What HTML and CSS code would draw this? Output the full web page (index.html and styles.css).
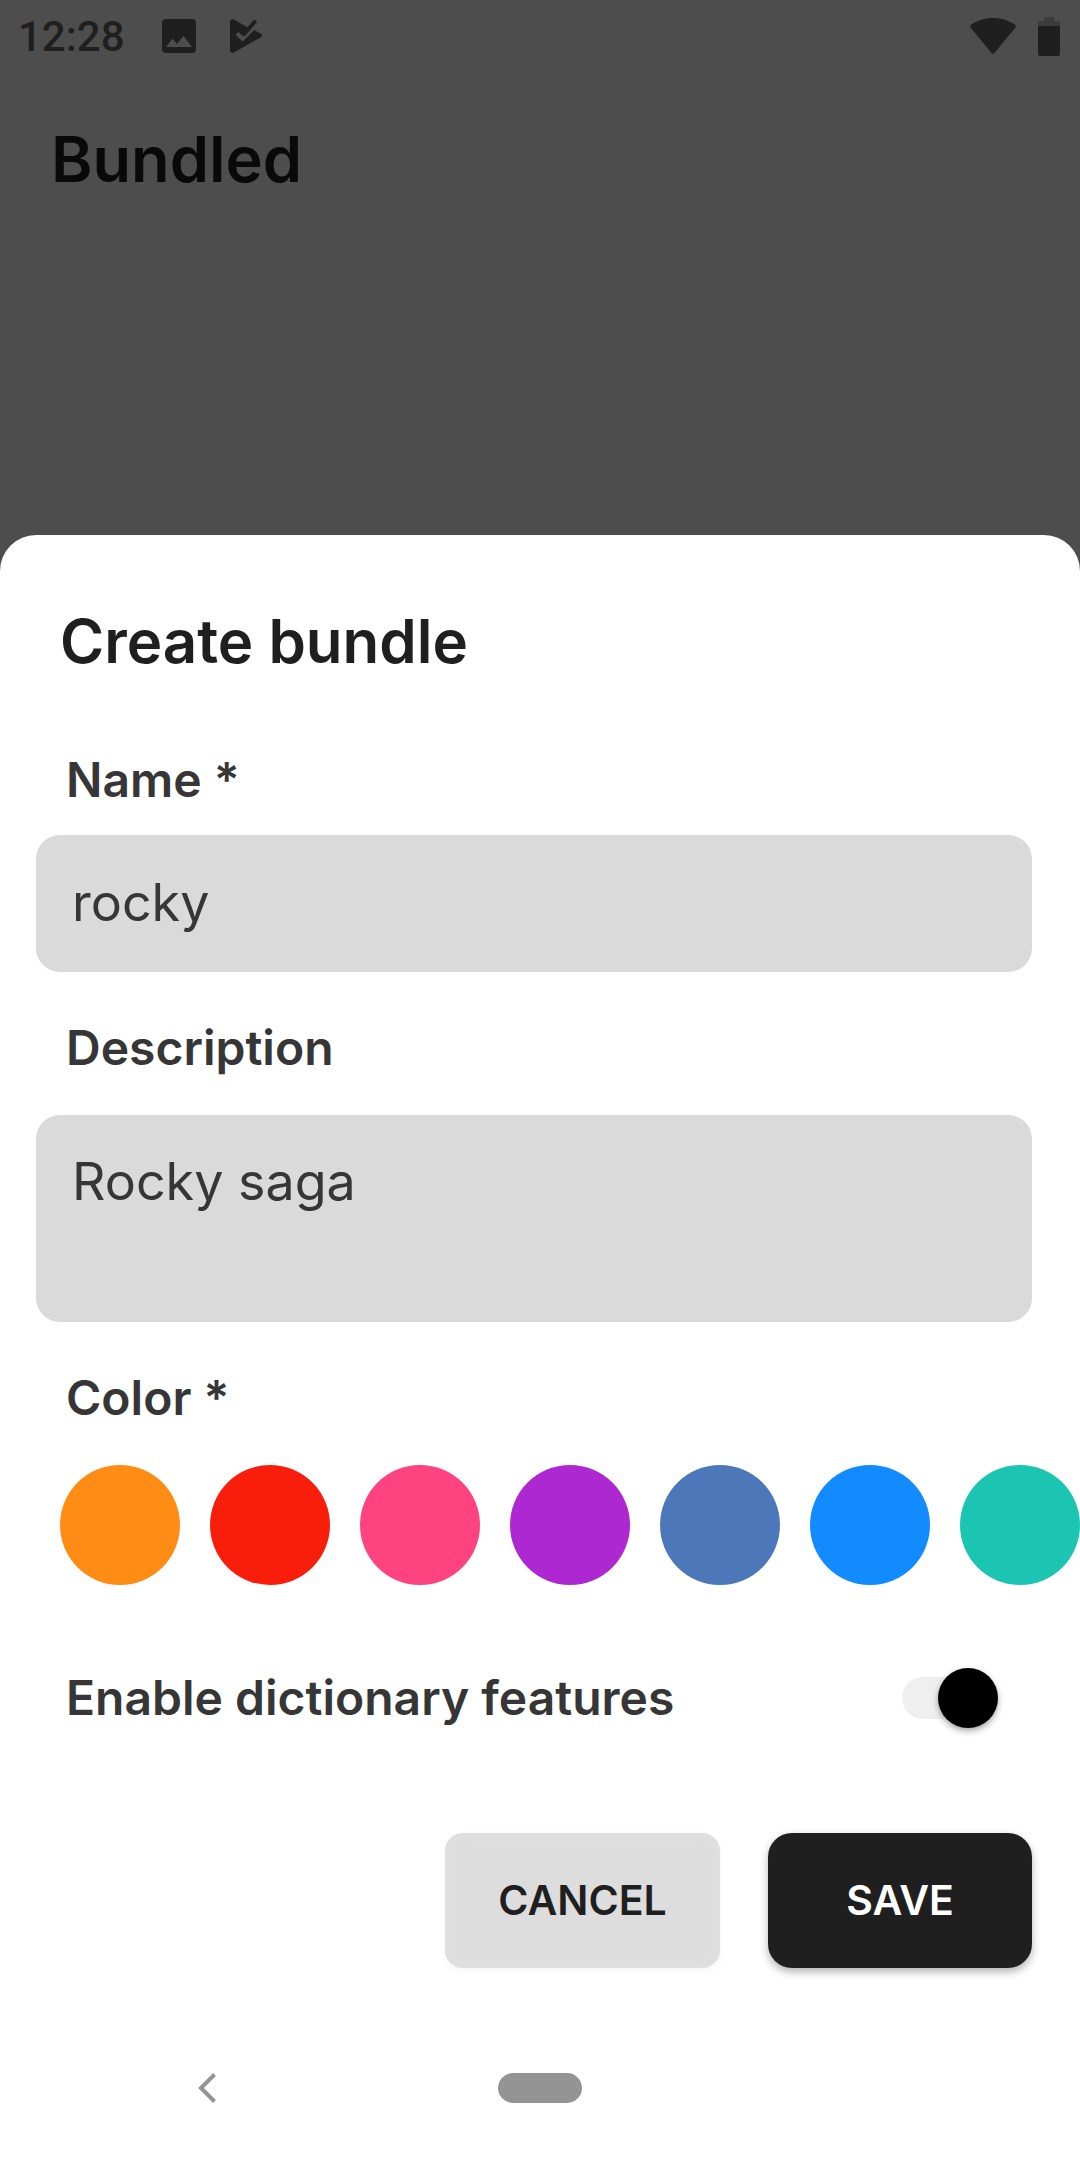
FILE: index.html
```html
<!DOCTYPE html>
<html lang="en">
<head>
<meta charset="utf-8">
<meta name="viewport" content="width=device-width, initial-scale=1">
<title>Bundled</title>
<link rel="stylesheet" href="styles.css">
</head>
<body>
<div class="screen">
  <div class="backdrop">
    <div class="status-bar">
      <div class="status-group">
        <span class="clock">12:28</span>
        <svg class="status-icon" width="34" height="34" viewBox="0 0 34 34" aria-hidden="true">
          <path fill-rule="evenodd" d="M4 0h26a4 4 0 0 1 4 4v26a4 4 0 0 1-4 4H4a4 4 0 0 1-4-4V4a4 4 0 0 1 4-4zM4 28h26l-8.500-11-6.500 8-4.500-5.500z"/>
        </svg>
        <svg class="status-icon" width="34" height="34" viewBox="0 0 34 34" aria-hidden="true">
          <path d="M0 3C0 .6 1.800-.5 3.800.6L13.500 6 22 11.500 24 11 31 14.800c1.400.9 1.400 2.500 0 3.400L3.800 33.400C1.800 34.500 0 33.400 0 31z"/>
          <path d="M7 14.500 12.500 20 27 5.500" class="tick-gap"/>
          <path d="M9.500 9.500 14.500 14.500 24.500 3" class="tick"/>
        </svg>
      </div>
      <div class="status-group status-group-end">
        <svg class="status-icon" width="46" height="36" viewBox="0 0 46 36" aria-hidden="true">
          <path d="M.8 9.800C-.2 8.600 0 7.600 1 6.800 7 2.400 15 0 23 0s16 2.400 22 6.800c1 .8 1.200 1.800.2 3L24.500 35c-.9 1.100-2.100 1.100-3 0z"/>
        </svg>
        <svg class="status-icon" width="22" height="39" viewBox="0 0 22 39" aria-hidden="true">
          <path class="battery-empty" d="M6 0h10v4h4a2 2 0 0 1 2 2v3H0V6a2 2 0 0 1 2-2h4z"/>
          <path d="M0 9h22v28a2 2 0 0 1-2 2H2a2 2 0 0 1-2-2z"/>
        </svg>
      </div>
    </div>
    <h1 class="app-title">Bundled</h1>
  </div>

  <form class="sheet" aria-labelledby="sheet-title">
    <h2 class="sheet-title" id="sheet-title">Create bundle</h2>

    <label class="field-label name-label" for="name">Name *</label>
    <input class="field" id="name" type="text" value="rocky">

    <label class="field-label" for="description">Description</label>
    <textarea class="field field-area" id="description">Rocky saga</textarea>

    <div class="field-label" id="color-label">Color *</div>
    <div class="swatches" role="radiogroup" aria-labelledby="color-label">
      <input class="swatch orange" type="radio" name="color" aria-label="Orange">
      <input class="swatch red" type="radio" name="color" aria-label="Red">
      <input class="swatch pink" type="radio" name="color" aria-label="Pink">
      <input class="swatch purple" type="radio" name="color" aria-label="Purple">
      <input class="swatch indigo" type="radio" name="color" aria-label="Indigo">
      <input class="swatch blue" type="radio" name="color" aria-label="Blue">
      <input class="swatch teal" type="radio" name="color" aria-label="Teal">
    </div>

    <div class="toggle-row">
      <label class="toggle-label" for="dictionary">Enable dictionary features</label>
      <input class="toggle" id="dictionary" type="checkbox" role="switch" checked>
    </div>

    <div class="actions">
      <button class="button cancel" type="button">CANCEL</button>
      <button class="button save" type="submit">SAVE</button>
    </div>
  </form>

  <nav class="nav-bar">
    <button class="nav-button" type="button" aria-label="Back">
      <svg width="20" height="30" viewBox="0 0 20 30" aria-hidden="true"><path class="chevron" d="M17.500 1.500 4 15 17.500 28.500"/></svg>
    </button>
    <button class="nav-button" type="button" aria-label="Home"><span class="pill"></span></button>
  </nav>
</div>
</body>
</html>
```
FILE: styles.css
```css
* {
  box-sizing: border-box;
}

body {
  margin: 0;
  background: #4d4d4d;
  font-family: Inter, "Liberation Sans", sans-serif;
}

button,
input,
textarea {
  margin: 0;
  border: 0;
  font: inherit;
}

.screen {
  display: flex;
  flex-direction: column;
  min-height: 100vh;
}

.backdrop {
  min-height: 535px;
}

.status-bar {
  display: flex;
  align-items: center;
  justify-content: space-between;
  height: 72px;
  padding: 0 20px 0 18px;
  color: #1f1f1f;
}

.status-group {
  display: flex;
  align-items: center;
  gap: 34px;
}

.status-group-end {
  gap: 22px;
}

.clock {
  width: 110px;
  padding-top: 2px;
  font: 500 42px/72px Roboto, sans-serif;
}

.status-icon {
  display: block;
  fill: #1f1f1f;
}

.battery-empty {
  fill: #3c3c3c;
}

.tick-gap,
.tick {
  fill: none;
  stroke: #4d4d4d;
  stroke-width: 4;
}

.tick {
  stroke: #1f1f1f;
  stroke-linecap: round;
}

.app-title {
  margin: 49px 51px 0;
  color: #090909;
  font-size: 63px;
  font-weight: 600;
  line-height: 76px;
}

.sheet {
  flex: 1;
  padding: 70px 48px 48px 36px;
  border-radius: 36px 36px 0 0;
  background: #fff;
}

.sheet-title {
  margin: 0 24px 75px;
  color: #1f1f1f;
  font-size: 60px;
  font-weight: 600;
  line-height: 72px;
}

.field-label {
  display: block;
  margin: 48px 30px 39px;
  color: #363636;
  font-size: 48px;
  font-weight: 600;
  line-height: 56px;
}

.name-label {
  margin: 0 30px 27px;
}

.field {
  display: block;
  width: 100%;
  height: 137px;
  padding: 35px 36px 37px;
  border-radius: 24px;
  background: #dadada;
  color: #363636;
  font-size: 52px;
  line-height: 64px;
}

.field-area {
  height: 207px;
  resize: none;
}

.swatches {
  display: flex;
  gap: 30px;
  margin: 0 -48px 0 -36px;
  padding-left: 60px;
  overflow: hidden;
}

.swatch {
  flex: none;
  width: 120px;
  height: 120px;
  border-radius: 50%;
  appearance: none;
}

.orange { background: #ff8c14; }
.red { background: #f91e0c; }
.pink { background: #ff4280; }
.purple { background: #ad28d0; }
.indigo { background: #4c78ba; }
.blue { background: #118bff; }
.teal { background: #1bc5b1; }

.toggle-row {
  display: flex;
  align-items: center;
  justify-content: space-between;
  margin: 83px 34px 105px 30px;
}

.toggle-label {
  color: #363636;
  font-size: 48px;
  font-weight: 600;
  line-height: 60px;
}

.toggle {
  display: flex;
  align-items: center;
  justify-content: flex-end;
  width: 96px;
  height: 42px;
  border-radius: 21px;
  background: #efefef;
  appearance: none;
}

.toggle::before {
  width: 60px;
  height: 60px;
  border-radius: 50%;
  background: #000;
  box-shadow: 0 3px 6px rgb(0 0 0 / 35%);
  content: "";
}

.actions {
  display: flex;
  justify-content: flex-end;
  gap: 48px;
}

.button {
  min-width: 264px;
  height: 135px;
  padding: 0 50px 2px;
  border-radius: 24px;
  font-size: 41px;
  font-weight: 600;
  line-height: 48px;
}

.cancel {
  min-width: 275px;
  border-radius: 18px;
  background: #ddd;
  box-shadow: 0 3px 8px rgb(0 0 0 / 4%), inset 0 0 12px #e2e2e2;
  color: #1f1f1f;
}

.save {
  background: #1f1f1f;
  box-shadow: 0 4px 8px rgb(0 0 0 / 30%);
  color: #fff;
}

.nav-bar {
  display: grid;
  grid-template-columns: 1fr 1fr 1fr;
  align-items: center;
  height: 144px;
  padding: 0 40px;
  background: #fff;
}

.nav-button {
  display: flex;
  justify-content: center;
  padding: 0;
  background: none;
}

.chevron {
  fill: none;
  stroke: #949494;
  stroke-width: 4;
}

.pill {
  width: 84px;
  height: 30px;
  border-radius: 15px;
  background: #949494;
}
```
